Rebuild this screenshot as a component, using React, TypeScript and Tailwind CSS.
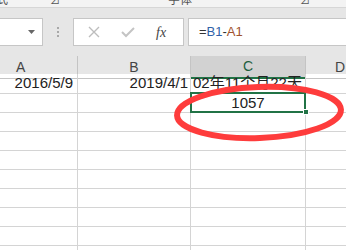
import React from "react";

const font = { fontFamily: '"Liberation Sans", "Noto Sans CJK SC", sans-serif' };

const rowCount = 8;

function Cell({
  className = "",
  children,
}: {
  className?: string;
  children?: React.ReactNode;
}) {
  return (
    <div
      className={
        "border-r border-b border-[#d4d4d4] flex items-center overflow-visible whitespace-nowrap " +
        className
      }
    >
      {children}
    </div>
  );
}

export default function App() {
  return (
    <div
      className="relative w-[346px] h-[250px] overflow-hidden bg-white text-[#222]"
      style={font}
    >
      {/* ribbon remains, cut off at the top like the screenshot */}
      <div className="h-[8px] bg-[#f3f3f3] border-b border-[#d6d6d6] relative overflow-hidden">
        <div className="flex items-end text-[12px] text-[#555] leading-none -mt-[6px]">
          <span className="ml-[-4px]">式</span>
          <span className="ml-[42px] text-[10px]">⊿</span>
          <span className="ml-[108px]">字体</span>
          <span className="ml-[108px] text-[10px]">⊿</span>
        </div>
      </div>

      {/* formula bar */}
      <div className="h-[48px] bg-[#e6e6e6] flex items-start pt-[10px]">
        <div className="w-[43px] h-[28px] bg-white border border-l-0 border-[#c6c6c6] flex items-center justify-end pr-[7px]">
          <svg width="7" height="4" viewBox="0 0 7 4">
            <path d="M0 0 L7 0 L3.5 4 Z" fill="#666" />
          </svg>
        </div>
        <div className="w-[30px] flex flex-col items-center gap-[2px] pt-[9px]">
          <div className="w-[2px] h-[2px] bg-[#a8a8a8]" />
          <div className="w-[2px] h-[2px] bg-[#a8a8a8]" />
          <div className="w-[2px] h-[2px] bg-[#a8a8a8]" />
        </div>
        <div className="w-[111px] h-[28px] bg-white border border-[#c6c6c6] flex items-center">
          <svg width="12" height="12" viewBox="0 0 12 12" className="ml-[14px]">
            <path d="M1 1 L11 11 M11 1 L1 11" stroke="#bdbdbd" strokeWidth="1.4" />
          </svg>
          <svg width="14" height="12" viewBox="0 0 14 12" className="ml-[21px]">
            <path d="M1 6 L5 10 L13 2" stroke="#c4c4c4" strokeWidth="2" fill="none" />
          </svg>
          <span
            className="ml-[21px] text-[14px] italic text-[#444]"
            style={{ fontFamily: '"Liberation Serif", serif' }}
          >
            fx
          </span>
        </div>
        <div className="w-[4px]" />
        <div className="flex-1 h-[28px] bg-white border border-r-0 border-[#c6c6c6] flex items-center pl-[10px] text-[13px]">
          <span className="text-[#333]">=</span>
          <span className="text-[#2f5fa8]">B1</span>
          <span className="text-[#333]">-</span>
          <span className="text-[#a0522d]">A1</span>
        </div>
      </div>

      {/* column headers */}
      <div className="grid grid-cols-[78px_113px_115px_1fr] h-[18px] bg-[#e6e6e6] text-[14px] text-[#444]">
        <div className="border-r border-b border-[#c4c4c4] flex items-center pl-[16px]">A</div>
        <div className="border-r border-b border-[#c4c4c4] flex items-center justify-center">B</div>
        <div className="bg-[#d2d2d2] border-r border-[#c4c4c4] border-b-2 border-b-[#217346] flex items-center justify-center text-[#1e5e3e]">
          C
        </div>
        <div className="border-b border-[#c4c4c4] flex items-center pl-[29px]">D</div>
      </div>

      {/* rows */}
      <div className="grid grid-cols-[78px_113px_115px_1fr] text-[15px]">
        <Cell className="h-[20px] justify-end pr-[4px]">2016/5/9</Cell>
        <Cell className="h-[20px] justify-end pr-[2px]">2019/4/1</Cell>
        <Cell className="h-[20px] pl-[2px]">02年11个月22天</Cell>
        <Cell className="h-[20px] border-r-0" />
        <Cell className="h-[19px]" />
        <Cell className="h-[19px]" />
        <Cell className="h-[19px] justify-center">1057</Cell>
        <Cell className="h-[19px] border-r-0" />
        {Array.from({ length: rowCount }).map((_, i) => (
          <React.Fragment key={i}>
            <Cell className="h-[19px]" />
            <Cell className="h-[19px]" />
            <Cell className="h-[19px]" />
            <Cell className="h-[19px] border-r-0" />
          </React.Fragment>
        ))}
      </div>

      {/* selection */}
      <div className="absolute left-[190px] top-[92px] w-[116px] h-[21px] border-2 border-[#217346]" />
      <div className="absolute left-[303px] top-[109px] w-[6px] h-[6px] bg-[#217346] border border-white" />

      {/* red marker circle */}
      <svg className="absolute left-0 top-0" width="346" height="250" viewBox="0 0 346 250">
        <ellipse
          cx="259"
          cy="112.5"
          rx="82"
          ry="25.5"
          fill="none"
          stroke="#fe3c3c"
          strokeWidth="6"
          transform="rotate(-2 259 112.5)"
        />
      </svg>
    </div>
  );
}
